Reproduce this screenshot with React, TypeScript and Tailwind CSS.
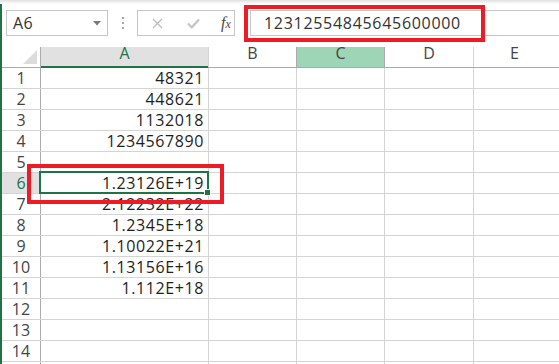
import React from "react";

// values as they show in column A
const CELLS: Record<number, string> = {
  1: "48321",
  2: "448621",
  3: "1132018",
  4: "1234567890",
  6: "1.23126E+19",
  7: "2.12232E+22",
  8: "1.2345E+18",
  9: "1.10022E+21",
  10: "1.13156E+16",
  11: "1.112E+18",
};

const ROWS = Array.from({ length: 14 }, (_, i) => i + 1);
const ACTIVE_ROW = 6;

function FormulaBar() {
  return (
    <div className="flex h-[43px] items-start pt-[6px]">
      {/* name box */}
      <div className="ml-[4px] flex h-[26px] w-[102px] items-center justify-between border border-[#c6c6c6] bg-white pl-[6px] pr-[6px]">
        <span className="leading-none text-[#333] tracking-[0.4px]">A6</span>
        <svg width="8" height="5" viewBox="0 0 8 5">
          <path d="M0 0 L8 0 L4 4.5 Z" fill="#7a7a7a" />
        </svg>
      </div>

      {/* grip dots */}
      <div className="ml-[14px] mt-[7px] flex flex-col gap-[3px]">
        <span className="block h-[2px] w-[2px] bg-[#a6a6a6]" />
        <span className="block h-[2px] w-[2px] bg-[#a6a6a6]" />
        <span className="block h-[2px] w-[2px] bg-[#a6a6a6]" />
      </div>

      {/* cancel / enter / fx */}
      <div className="ml-[13px] flex h-[26px] w-[98px] items-center border border-[#c6c6c6] bg-white">
        <svg className="ml-[14px]" width="11" height="11" viewBox="0 0 11 11">
          <path d="M1 1 L10 10 M10 1 L1 10" stroke="#bdbdbd" strokeWidth="1.3" />
        </svg>
        <svg className="ml-[24px]" width="13" height="11" viewBox="0 0 13 11">
          <path d="M1 5.5 L4.8 9.3 L12 1.5" stroke="#c4c4c4" strokeWidth="2.2" fill="none" />
        </svg>
        <span className="ml-[21px] font-['Liberation_Serif',serif] text-[16px] italic leading-none text-[#4a4a4a]">
          f<span className="text-[12px]">x</span>
        </span>
      </div>

      {/* formula input */}
      <div className="ml-[15px] flex h-[26px] flex-1 items-center border-y border-l border-[#c6c6c6] bg-white pl-[13px]">
        <span className="leading-none text-[#333] tracking-[0.7px]">12312554845645600000</span>
      </div>
    </div>
  );
}

function HeaderRow() {
  return (
    <div className="flex h-[21px] border-b border-[#ababab] bg-white">
      <div className="relative w-[39px] shrink-0 border-r border-[#ababab]">
        <svg className="absolute bottom-[3px] right-[3px]" width="14" height="14" viewBox="0 0 14 14">
          <path d="M14 0 L14 14 L0 14 Z" fill="#dcdcdc" />
        </svg>
      </div>
      <div className="-mb-px flex w-[167px] shrink-0 items-end justify-center border-b-2 border-[#217346] bg-[#e1e1e1] pb-[1px] text-[#217346]">
        A
      </div>
      <div className="flex w-[88px] shrink-0 items-end justify-center border-l border-[#d4d4d4] pb-[2px] text-[#444]">
        B
      </div>
      <div className="flex w-[88px] shrink-0 items-end justify-center border-l border-[#ababab] bg-[#9fd5b7] pb-[2px] text-[#444]">
        C
      </div>
      <div className="flex w-[89px] shrink-0 items-end justify-center border-l border-[#ababab] pb-[2px] text-[#444]">
        D
      </div>
      <div className="flex flex-1 items-end justify-center border-l border-[#d4d4d4] pb-[2px] pr-[4px] text-[#444]">
        E
      </div>
    </div>
  );
}

function Row({ n }: { n?: number }) {
  const active = n === ACTIVE_ROW;
  return (
    <div className="flex h-[21px] border-b border-[#d4d4d4]">
      <div
        className={`flex w-[39px] shrink-0 items-center justify-center border-r border-[#ababab] leading-[20px] ${
          active ? "bg-[#e1e1e1] text-[#217346]" : "bg-white text-[#444]"
        }`}
      >
        {n}
      </div>
      <div className="relative flex w-[167px] shrink-0 items-center justify-end pr-[4px] leading-[20px] text-[#1e1e1e] tracking-[0.6px]">
        {n ? CELLS[n] ?? "" : ""}
        {active && (
          <div className="absolute -left-[2px] -top-[2px] -right-[1px] bottom-[-1px] border-2 border-[#217346]">
            <span className="absolute -bottom-[4px] -right-[4px] block h-[7px] w-[7px] border border-white bg-[#217346]" />
          </div>
        )}
      </div>
      <div className="w-[88px] shrink-0 border-l border-[#d4d4d4]" />
      <div className="w-[88px] shrink-0 border-l border-[#d4d4d4]" />
      <div className="w-[89px] shrink-0 border-l border-[#d4d4d4]" />
      <div className="flex-1 border-l border-[#d4d4d4]" />
    </div>
  );
}

export default function App() {
  return (
    <div className="relative h-[364px] w-[559px] overflow-hidden bg-white font-['Open_Sans',sans-serif] text-[16px]">
      <div className="h-[4px] bg-gradient-to-b from-[#e0e0e0] to-white" />
      <div className="border-l-2 border-[#217346]">
        <FormulaBar />
        <HeaderRow />
        {ROWS.map((n) => (
          <Row key={n} n={n} />
        ))}
        {/* sliver of the next row, cut by the window edge */}
        <Row />
      </div>

      {/* red call-out boxes */}
      <div className="pointer-events-none absolute left-[244px] top-[5px] h-[37px] w-[241px] border-4 border-[#ed1c24]" />
      <div className="pointer-events-none absolute left-[27px] top-[164px] h-[40px] w-[197px] border-4 border-[#ed1c24]" />
    </div>
  );
}
